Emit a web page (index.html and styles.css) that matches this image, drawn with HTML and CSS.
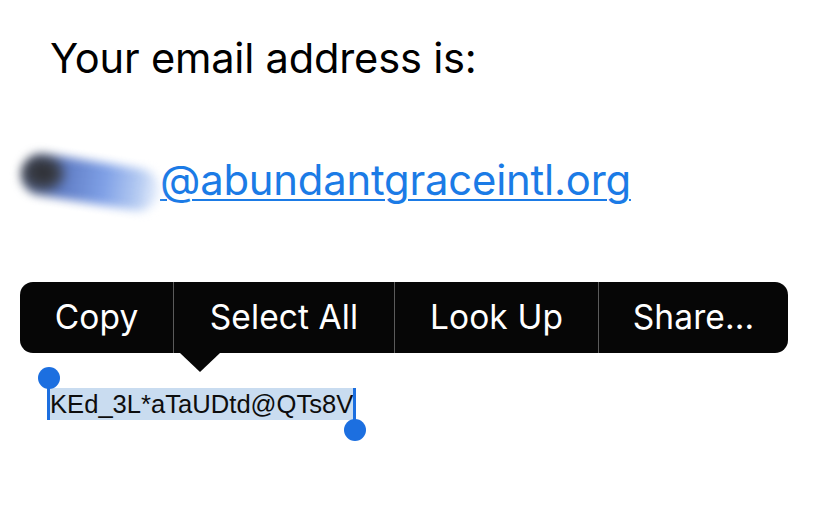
FILE: index.html
```html
<!DOCTYPE html>
<html>
<head>
<meta charset="utf-8">
<link rel="stylesheet" href="styles.css">
</head>
<body>
<div class="page">
  <p class="title">Your email address is:</p>
  <p class="email"><span class="blur"></span><a class="link" href="#">@abundantgraceintl.org</a></p>
  <div class="pw-area">
    <div class="menu">
      <span class="item">Copy</span>
      <span class="item">Select All</span>
      <span class="item">Look Up</span>
      <span class="item">Share...</span>
      <span class="arrow"></span>
    </div>
    <p class="pw"><span class="sel">KEd_3L*aTaUDtd@QTs8V<span class="h-left"></span><span class="h-right"></span></span></p>
  </div>
</div>
</body>
</html>
```
FILE: styles.css
```css
html, body {
  margin: 0;
  padding: 0;
  background: #fff;
}
.page {
  width: 828px;
  height: 527px;
  overflow: hidden;
  font-family: Inter, "Noto Sans", sans-serif;
  color: #000;
  padding-top: 32px;
  box-sizing: border-box;
}
.title {
  margin: 0;
  padding-left: 50px;
  font-size: 41.6px;
  line-height: 52px;
  letter-spacing: -0.2px;
}
.email {
  margin: 70px 0 0 0;
  padding-left: 20px;
  height: 52px;
  display: flex;
  align-items: flex-end;
}
.blur {
  display: inline-block;
  flex: none;
  width: 140px;
  height: 42px;
  margin-bottom: 3px;
  border-radius: 21px;
  background:
    radial-gradient(ellipse 26px 21px at 22px 45%, #2a2b2f 0%, #3b3f4a 55%, rgba(70,80,110,0) 100%),
    linear-gradient(90deg, #4a5570 0%, #5f7cc4 30%, #7fa0e6 60%, #b5cbf2 85%, rgba(215,228,250,0.5) 100%);
  filter: blur(5px);
  transform: rotate(9deg);
}
.link {
  font-size: 41.8px;
  line-height: 52px;
  color: #1b7be6;
  text-decoration: underline;
  text-decoration-thickness: 2px;
  text-underline-offset: 4px;
  letter-spacing: -0.2px;
}
.pw-area {
  position: relative;
  margin-top: 182px;
  padding-left: 50px;
}
.menu {
  position: absolute;
  left: 20px;
  top: -106px;
  width: 768px;
  height: 71px;
  background: #060606;
  border-radius: 13px;
  display: flex;
  align-items: stretch;
}
.item {
  display: flex;
  align-items: center;
  justify-content: center;
  color: #fff;
  font-size: 33.5px;
  letter-spacing: 0.1px;
  border-left: 1px solid #5a5a5a;
  padding-bottom: 1px;
}
.item:nth-child(1) { width: 153px; border-left: 0; }
.item:nth-child(2) { width: 220px; }
.item:nth-child(3) { width: 203px; }
.item:nth-child(4) { flex: 1; }
.arrow {
  position: absolute;
  left: 160px;
  top: 71px;
  width: 0;
  height: 0;
  border-left: 20px solid transparent;
  border-right: 20px solid transparent;
  border-top: 19px solid #060606;
}
.pw {
  margin: 0;
}
.sel {
  position: relative;
  display: inline-block;
  background: #c9dcf0;
  font-family: "Liberation Sans", Arial, sans-serif;
  font-size: 25.6px;
  line-height: 32px;
  color: #0d0d0d;
}
.h-left, .h-right {
  position: absolute;
  width: 3px;
  background: #1c6fe0;
}
.h-left {
  left: -3px;
  top: -10px;
  bottom: 0;
}
.h-left::before, .h-right::after {
  content: "";
  position: absolute;
  width: 22px;
  height: 22px;
  border-radius: 50%;
  background: #1c6fe0;
  left: -9.5px;
}
.h-left::before { top: -11px; }
.h-right {
  right: -3px;
  top: 0;
  bottom: -10px;
}
.h-right::after { bottom: -11px; }
```
